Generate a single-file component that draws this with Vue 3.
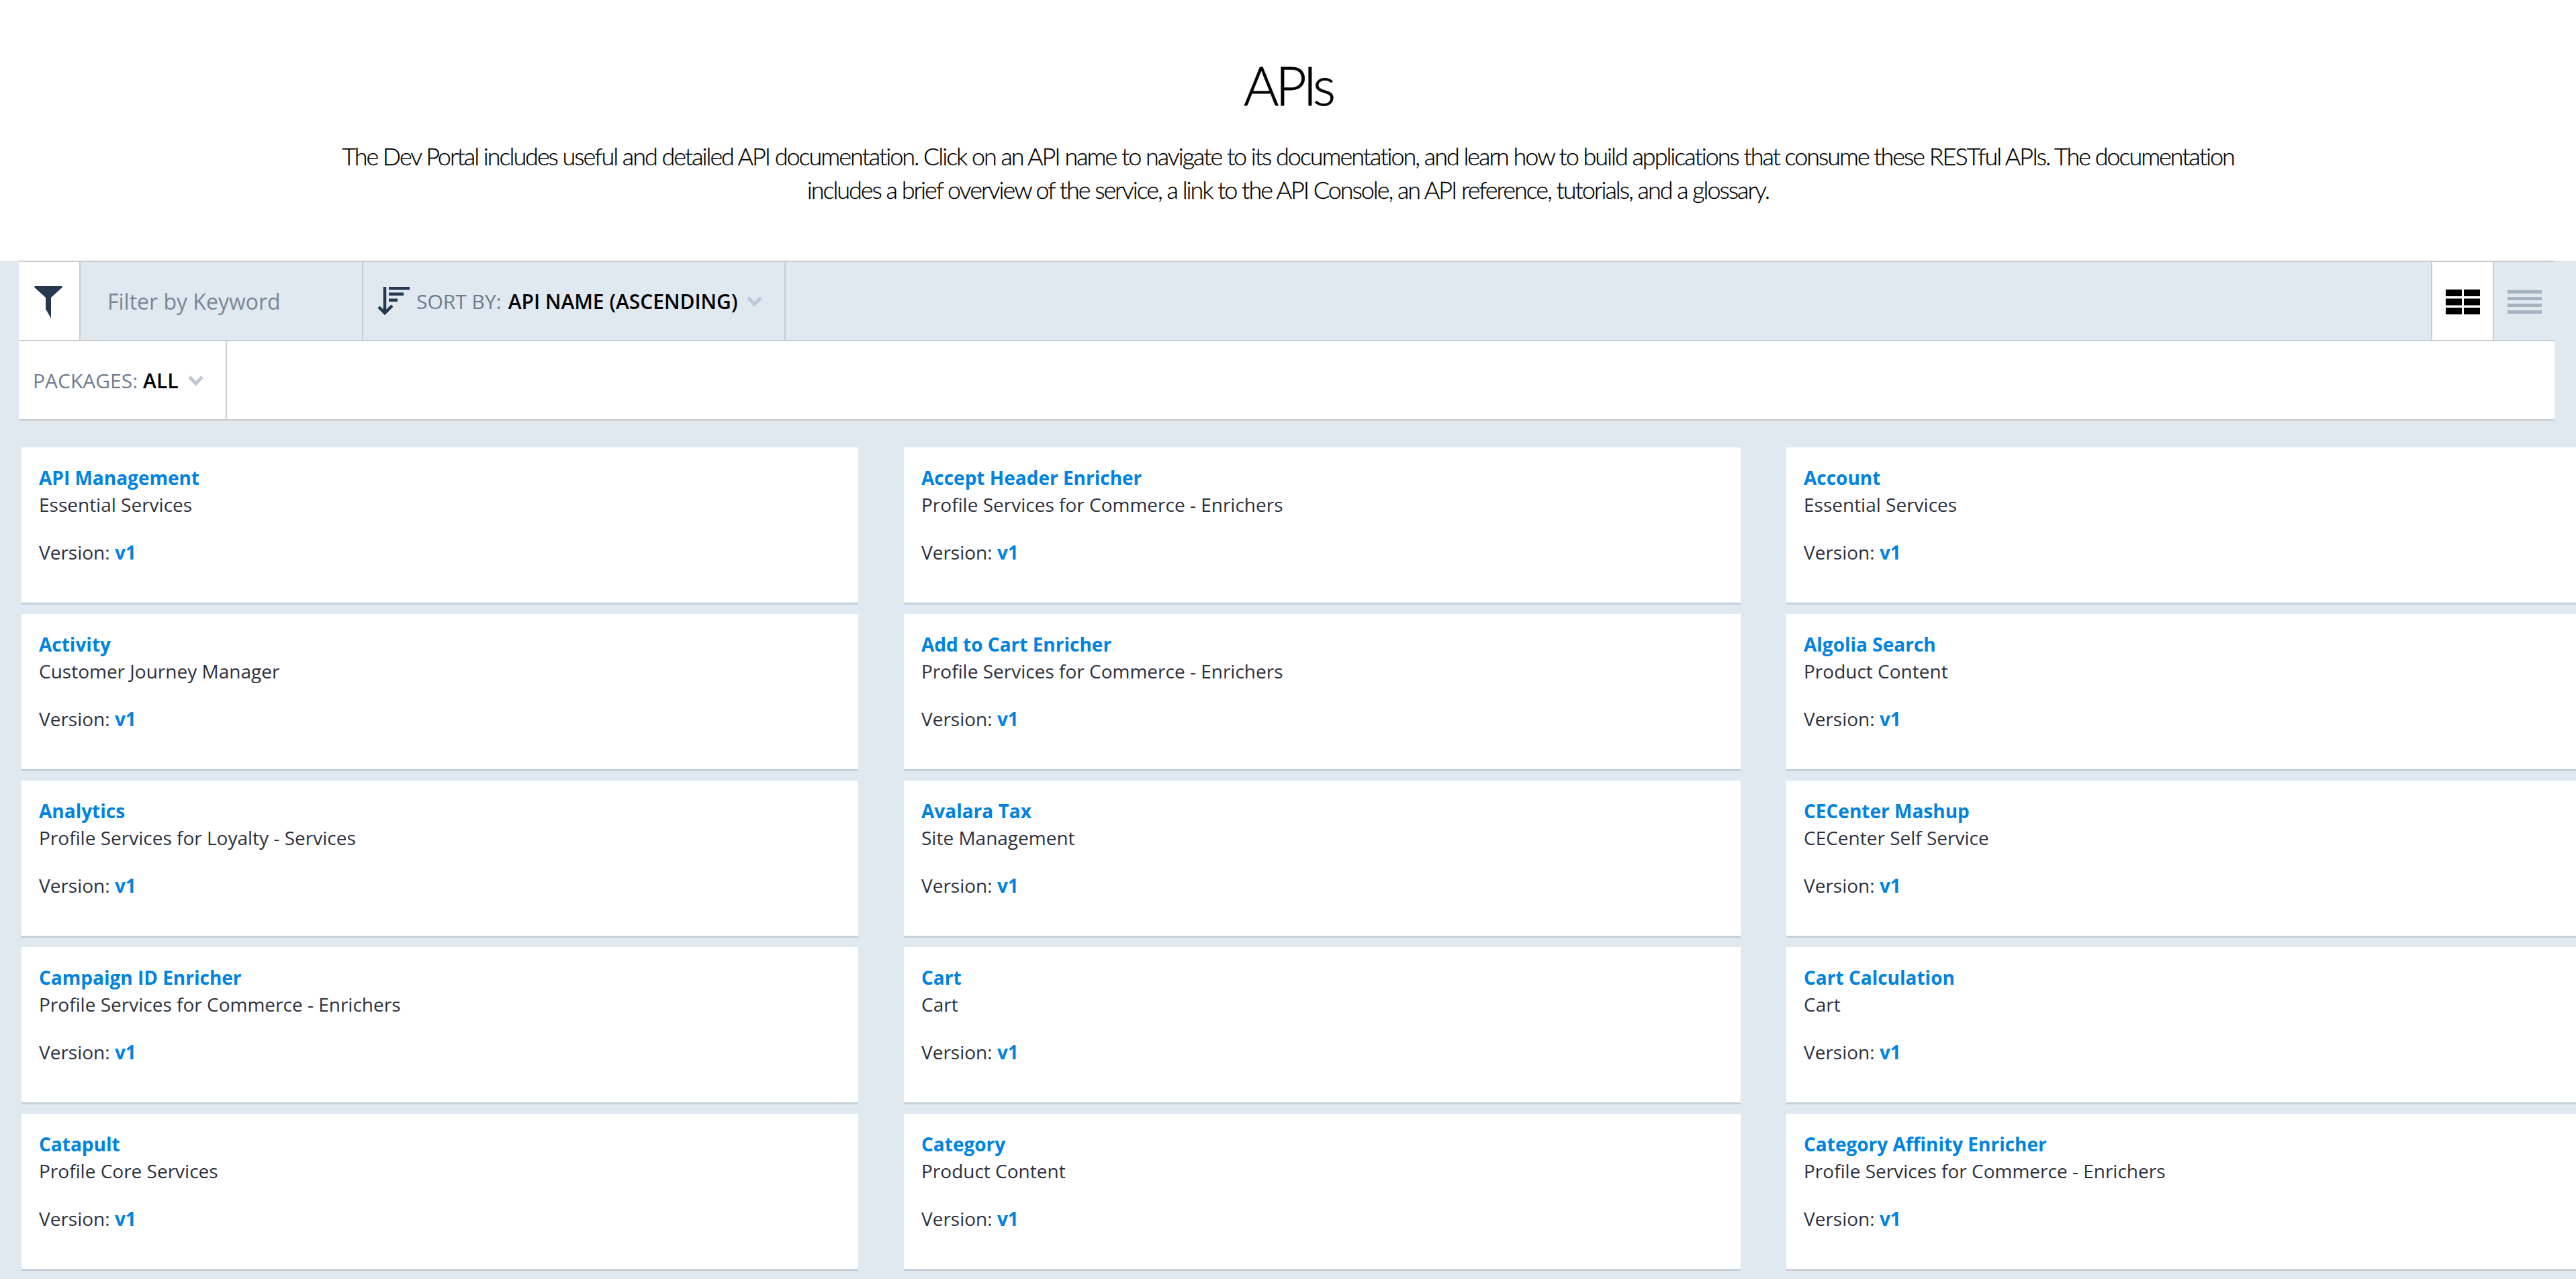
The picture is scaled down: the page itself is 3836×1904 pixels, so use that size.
<script setup>
const apis = [
	{ name: 'API Management', pack: 'Essential Services' },
	{ name: 'Accept Header Enricher', pack: 'Profile Services for Commerce - Enrichers' },
	{ name: 'Account', pack: 'Essential Services' },
	{ name: 'Activity', pack: 'Customer Journey Manager' },
	{ name: 'Add to Cart Enricher', pack: 'Profile Services for Commerce - Enrichers' },
	{ name: 'Algolia Search', pack: 'Product Content' },
	{ name: 'Analytics', pack: 'Profile Services for Loyalty - Services' },
	{ name: 'Avalara Tax', pack: 'Site Management' },
	{ name: 'CECenter Mashup', pack: 'CECenter Self Service' },
	{ name: 'Campaign ID Enricher', pack: 'Profile Services for Commerce - Enrichers' },
	{ name: 'Cart', pack: 'Cart' },
	{ name: 'Cart Calculation', pack: 'Cart' },
	{ name: 'Catapult', pack: 'Profile Core Services' },
	{ name: 'Category', pack: 'Product Content' },
	{ name: 'Category Affinity Enricher', pack: 'Profile Services for Commerce - Enrichers' },
]
</script>

<template>
	<div class="page">
		<header class="intro">
			<h1 class="title">APIs</h1>
			<p class="lead">
				The Dev Portal includes useful and detailed API documentation. Click on an API name to navigate to its documentation, and learn how to build applications that consume these RESTful APIs. The documentation includes a brief overview of the service, a link to the API Console, an API reference, tutorials, and a glossary.
			</p>
		</header>

		<section class="content">
			<div class="toolbar">
				<div class="filter-btn">
					<svg width="42" height="48" viewBox="0 0 42 48">
						<path d="M1 0H41Q42.500 1 41.500 2L25 17V48L17 34V17L0.500 2Q-0.500 1 1 0Z" fill="#253850" />
					</svg>
				</div>
				<div class="keyword">Filter by Keyword</div>
				<div class="sort">
					<svg class="sort-icon" width="48" height="42" viewBox="0 0 48 42">
						<path d="M11 0V38M2 30L11 39L22 28" fill="none" stroke="#253850" stroke-width="4.500" />
						<path d="M17 0H48V4.500H17ZM17 8.500H39V13H17ZM17 17.500H30V22H17Z" fill="#253850" />
					</svg>
					<span class="label">SORT BY:</span>
					<span class="value">API NAME (ASCENDING)</span>
					<svg class="chevron" width="23" height="15" viewBox="0 0 23 15">
						<path d="M2 2L11.500 12L21 2" fill="none" stroke="#bec8d4" stroke-width="5" />
					</svg>
				</div>
				<div class="view-switch">
					<div class="view-btn active">
						<svg width="51" height="37" viewBox="0 0 51 37">
							<path d="M0 0H24V10H0ZM27 0H51V10H27ZM0 13.500H24V23.500H0ZM27 13.500H51V23.500H27ZM0 27H24V37H0ZM27 27H51V37H27Z" fill="#000" />
						</svg>
					</div>
					<div class="view-btn">
						<svg width="51" height="35" viewBox="0 0 51 35">
							<path d="M0 0H51V5H0ZM0 10H51V15H0ZM0 20H51V25H0ZM0 30H51V35H0Z" fill="#a5b2bf" />
						</svg>
					</div>
				</div>
			</div>

			<div class="filters">
				<div class="packages">
					<span class="label">PACKAGES:</span>
					<span class="value">ALL</span>
					<svg class="chevron" width="23" height="15" viewBox="0 0 23 15">
						<path d="M2 2L11.500 12L21 2" fill="none" stroke="#bec8d4" stroke-width="5" />
					</svg>
				</div>
			</div>

			<div class="grid">
				<article v-for="api in apis" :key="api.name" class="card">
					<a class="name">{{ api.name }}</a>
					<div class="pack">{{ api.pack }}</div>
					<div class="version">Version: <b>v1</b></div>
				</article>
			</div>
		</section>
	</div>
</template>

<style scoped>
.page {
	width: 3836px;
	height: 1904px;
	overflow: hidden;
	background: #fff;
	color: #000;
	font-family: "Open Sans", sans-serif;
	font-size: 28px;
}

.intro {
	height: 388px;
	padding-top: 76px;
	box-sizing: border-box;
	text-align: center;
}

.title {
	margin: 0;
	font-family: "Lato", sans-serif;
	font-size: 80px;
	font-weight: 300;
	line-height: 100px;
	letter-spacing: -5px;
	-webkit-text-stroke: 0.8px #000;
}

.lead {
	width: 2880px;
	margin: 31px auto 0;
	font-family: "Lato", sans-serif;
	font-size: 36px;
	font-weight: 300;
	line-height: 50px;
	letter-spacing: -2.05px;
	-webkit-text-stroke: 0.3px #000;
}

.content {
	height: 1516px;
	padding: 0 32px 0 28px;
	background: #e0e8f0;
}

.toolbar,
.filters {
	display: flex;
	height: 116px;
	box-sizing: content-box;
	border-bottom: 2px solid #ccc;
}

.toolbar {
	border-top: 2px solid #ccc;
}

.filter-btn {
	display: flex;
	align-items: center;
	justify-content: center;
	width: 92px;
	padding: 3px 2px 0 0;
	box-sizing: border-box;
	background: #fff;
	border-right: 2px solid #ccc;
}

.keyword {
	display: flex;
	align-items: center;
	width: 421px;
	padding-left: 40px;
	box-sizing: border-box;
	color: #7a8694;
	font-size: 32px;
	border-right: 2px solid #c4ccd4;
}

.sort {
	display: flex;
	align-items: center;
	width: 629px;
	padding-left: 21px;
	box-sizing: border-box;
	font-size: 30px;
	border-right: 2px solid #c4ccd4;
}

.sort-icon {
	margin-right: 10px;
}

.label {
	color: #6f7c8c;
}

.value {
	margin-left: 8px;
	color: #000;
	font-weight: 600;
}

.sort .value {
	margin-left: 10px;
}

.chevron {
	margin-left: 14px;
}

.view-switch {
	display: flex;
	margin-left: auto;
}

.view-btn {
	display: flex;
	align-items: center;
	justify-content: center;
	width: 92px;
	padding-top: 3px;
	border-left: 2px solid #ccc;
	box-sizing: border-box;
}

.view-btn.active {
	background: #fff;
}

.filters {
	background: #fff;
}

.packages {
	display: flex;
	align-items: center;
	width: 310px;
	padding-left: 21px;
	box-sizing: border-box;
	font-size: 30px;
	border-right: 2px solid #ccc;
}

.grid {
	display: grid;
	grid-template-columns: repeat(3, 1246px);
	column-gap: 68px;
	row-gap: 14px;
	margin-top: 40px;
	margin-left: 4px;
}

.card {
	height: 234px;
	padding: 25px 26px 0;
	box-sizing: border-box;
	background: #fff;
	border-bottom: 3px solid #c5d0da;
	line-height: 40px;
}

.name {
	display: block;
	color: #0083e0;
	font-weight: 700;
}

.pack {
	color: #2c303d;
}

.version {
	margin-top: 31px;
	color: #2c303d;
}

.version b {
	color: #0083e0;
	font-weight: 700;
}
</style>
